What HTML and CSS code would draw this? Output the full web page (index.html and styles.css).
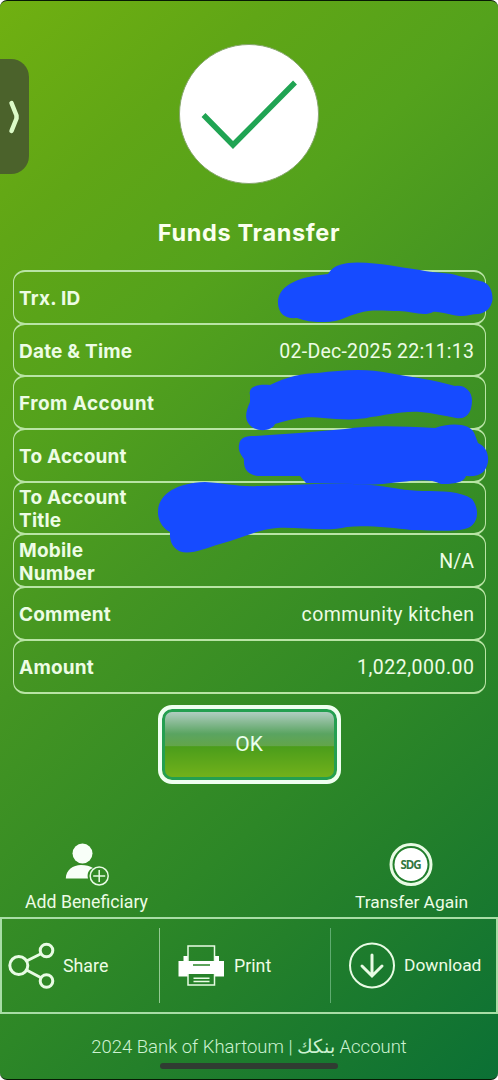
FILE: index.html
```html
<!DOCTYPE html>
<html lang="en">
<head>
<meta charset="utf-8">
<title>Funds Transfer</title>
<link rel="stylesheet" href="styles.css">
</head>
<body>
<main class="screen">
  <aside class="drawer"><svg width="12" height="34" viewBox="0 0 12 34"><path d="M3.500 3 8.500 15.500v3L3.500 31" /></svg></aside>
  <header class="hero">
    <svg class="check" width="140" height="140" viewBox="0 0 140 140"><circle cx="70" cy="70" r="69.500"/><path d="M24.500 71 54 101 116 38.500"/></svg>
    <h1>Funds Transfer</h1>
  </header>
  <section class="details">
    <div class="row"><b>Trx. ID</b></div>
    <div class="row"><b>Date &amp; Time</b><span class="date">02-Dec-2025 22:11:13</span></div>
    <div class="row"><b class="from">From Account</b></div>
    <div class="row"><b>To Account</b></div>
    <div class="row"><b>To Account<br>Title</b></div>
    <div class="row"><b>Mobile<br>Number</b><span>N/A</span></div>
    <div class="row"><b>Comment</b><span class="comment">community kitchen</span></div>
    <div class="row"><b>Amount</b><span class="amount">1,022,000.00</span></div>
    <svg class="redactions" width="498" height="300" viewBox="0 258 498 300">
      <path d="M278 304C277 287 295 277 328 274C334 264 345 263 357 262.500C382 263 398 267 420 270C433 273 449 272 459 276L480 281C489 282 493 291 492.500 300C491 308 486 313 478 314C470 314 465 318 453 315C446 314 438 311 433 312C424 317 411 311 399 311C384 311 371 309 359 313C346 316 340 323 321 322C311 322 306 321 297 318C285 319 279 314 278 304Z"/>
      <path d="M250 395C248 387 256 384 270 385C286 377 303 373 318 373C341 370 367 368 389 373C411 377 435 380 455 386C464 384 472 391 472 400C472 411 468 420 456 418C445 416 433 413 420 412C399 411 384 416 371 417C355 421 338 419 323 418C306 416 292 419 275 424C272 431 259 432 252 427C243 420 246 411 250 402Z"/>
      <path d="M239 445C240 437 246 436 255 436L299 433L345 429C369 425 398 426 435 428C449 423 471 422 475 435L478 443C485 446 489 453 488 462C486 472 481 477 466 476C463 484 450 484 441 484C429 478 415 481 400 482C383 484 368 486 354 484L306 483L300 476H258C249 475 243 470 244 459C241 455 238 451 239 445Z"/>
      <path d="M158 514C157 495 175 483 205 482C225 483 237 487 260 486C297 485 330 482 371 485C391 487 407 491 423 491C443 491 460 491 472 499C479 508 479 521 470 527C459 533 434 530 411 530C393 528 366 525 347 527C329 532 300 527 277 528C255 530 240 539 220 544C203 549 184 558 175 548C169 542 170 534 170 532C164 529 159 523 158 514Z"/>
    </svg>
  </section>
  <div class="confirm"><button class="ok">OK</button></div>
  <section class="shortcuts">
    <div class="shortcut add">
      <svg width="46" height="46" viewBox="0 0 46 46"><g fill="#f8fff8"><circle cx="19.500" cy="11.500" r="10"/><path d="M2.800 36.500C3 28 10 23 18 23c5 0 9 1 12 3-5 2-6 6-5 10.500Z"/></g><g fill="none" stroke="#e8fbe4" stroke-width="1.500"><circle cx="36.200" cy="34" r="9"/><path d="M30.200 34h12M36.200 28v12"/></g></svg>
      <span>Add Beneficiary</span>
    </div>
    <div class="shortcut again">
      <svg width="46" height="46" viewBox="0 0 46 46"><circle cx="23" cy="22.500" r="20" fill="none" stroke="#e8fbe4" stroke-width="3"/><circle cx="23" cy="22.500" r="16.500" fill="#fff"/><text x="23" y="26.500" text-anchor="middle" textLength="21">SDG</text></svg>
      <span>Transfer Again</span>
    </div>
  </section>
  <nav class="toolbar">
    <div class="tool share"><svg width="48" height="50" viewBox="0 0 48 50" fill="none" stroke="#e8fbe4" stroke-width="3"><circle cx="10.800" cy="25.500" r="9"/><circle cx="38.500" cy="10.500" r="6.300"/><circle cx="38.500" cy="41" r="6.300"/><path d="m18.500 21 15-7.500M18.500 30l15 8"/></svg><span>Share</span></div>
    <div class="tool print"><svg width="48" height="50" viewBox="0 0 48 50"><path fill="#fff" d="M1.500 21h5v-5h4.500v5h27v-5h4v5h5v15.500h-9V34H11v2.500H1.500Z"/><g fill="none" stroke="#e8fbe4" stroke-width="1.500"><path d="M11 21V6h26.500v15M11 34v11h26.500V34"/><path d="M16.500 38.200h16M16.500 41.500h16"/></g><path d="M16 25h17" stroke="#278426" stroke-width="1.500"/></svg><span>Print</span></div>
    <div class="tool download"><svg width="48" height="50" viewBox="0 0 48 50" fill="none" stroke="#e8fbe4"><circle cx="24" cy="25.500" r="22" stroke-width="2"/><path d="M24 15v20M14 26l10 10 10-10" stroke-width="3" stroke-linecap="round"/></svg><span>Download</span></div>
  </nav>
  <footer><p>2024 Bank of Khartoum | <bdi>بنكك</bdi> Account</p><i class="home"></i></footer>
</main>
</body>
</html>
```
FILE: styles.css
```css
* { box-sizing: border-box; }
html { background: #fff; }
body { margin: 0; font-family: Roboto, "DejaVu Sans", sans-serif; color: #edfce5; }
.screen { position: relative; width: 498px; height: 1080px; overflow: hidden; display: flex; flex-direction: column; border-top: 1px solid #071a04; border-bottom: 1px solid #071a04; border-radius: 7px; background: linear-gradient(138deg, #70b011 0%, #60a616 16%, #54a21c 30%, #449522 46%, #2d8727 69%, #24802a 78%, #0b7035 100%); }
.drawer { position: absolute; left: 0; top: 58px; width: 29px; height: 115px; border-radius: 0 18px 18px 0; background: #4b622b; display: flex; align-items: center; padding-left: 8px; }
.drawer path { fill: none; stroke: #dcfbc7; stroke-width: 4.500; stroke-linecap: round; stroke-linejoin: round; }
.hero { height: 269px; padding-top: 43px; display: flex; flex-direction: column; align-items: center; }
.check circle { fill: #fff; stroke: #86a66d; stroke-width: 1; }
.check path { fill: none; stroke: #20a453; stroke-width: 5.500; }
h1 { margin: 34px 0 0; font: 700 23.500px/30px Inter, sans-serif; letter-spacing: .65px; color: #faffee; white-space: nowrap; }
.details { position: relative; margin: 0 12px 0 13px; display: grid; grid-template-rows: repeat(8, 52.7px); }
.row { height: 54.700px; border: solid #b9e4a5; border-width: 2px 1px; border-radius: 12px; display: flex; align-items: center; justify-content: space-between; padding: 0 11px 0 5px; font-size: 19.500px; line-height: 23px; white-space: nowrap; }
.row b { font: 700 19px/23px Inter, sans-serif; letter-spacing: .2px; padding-top: 2px; }
.row .from { letter-spacing: .45px; }
.row span { padding-top: 2px; }
.date { letter-spacing: .25px; margin-right: -.25px; }
.comment { letter-spacing: .45px; margin-right: -.45px; }
.amount { letter-spacing: .5px; margin-right: -.5px; }
.redactions { position: absolute; left: -13px; top: -12px; }
.redactions path { fill: #164bff; }
.confirm { margin-top: 13px; display: flex; justify-content: center; }
.ok { width: 183px; height: 79px; border: 4px solid #effff0; border-radius: 14px; padding: 0; color: #eaffed; font: 21px Roboto, sans-serif; background: linear-gradient(#b4cfc5 3%, #5aa461 35%, #63a54a 52%, #4b9d1b 53%, #75b31b 100%); box-shadow: inset 0 0 0 3px #249f50; }
.shortcuts { margin-top: 58px; height: 75px; display: flex; justify-content: space-between; padding: 0 30px 0 25px; font-size: 17.700px; }
.shortcut { display: flex; flex-direction: column; align-items: center; }
.shortcut span { line-height: 22px; margin-top: 3px; white-space: nowrap; }
.again span { font-size: 17.400px; }
.shortcut text { font: 700 11.500px "Open Sans", sans-serif; fill: #337640; }
.toolbar { height: 97px; border: 2px solid #a8dda6; display: flex; padding: 9px 0; font-size: 17.800px; }
.tool { display: flex; align-items: center; }
.share { width: 158px; padding-left: 6px; border-right: 1px solid #94ca93; gap: 7px; }
.print { width: 171px; padding-left: 17px; border-right: 1px solid #5fac70; gap: 9px; }
.download { padding-left: 17px; gap: 8px; font-size: 17.400px; }
footer { flex: 1; display: flex; flex-direction: column; align-items: center; }
footer p { margin: 20px 0 0; font-size: 18.500px; line-height: 26px; font-weight: 300; white-space: nowrap; color: #cdf2d2; }
.home { width: 178px; height: 6px; border-radius: 3px; background: #303c32; margin-top: 3px; }
```
